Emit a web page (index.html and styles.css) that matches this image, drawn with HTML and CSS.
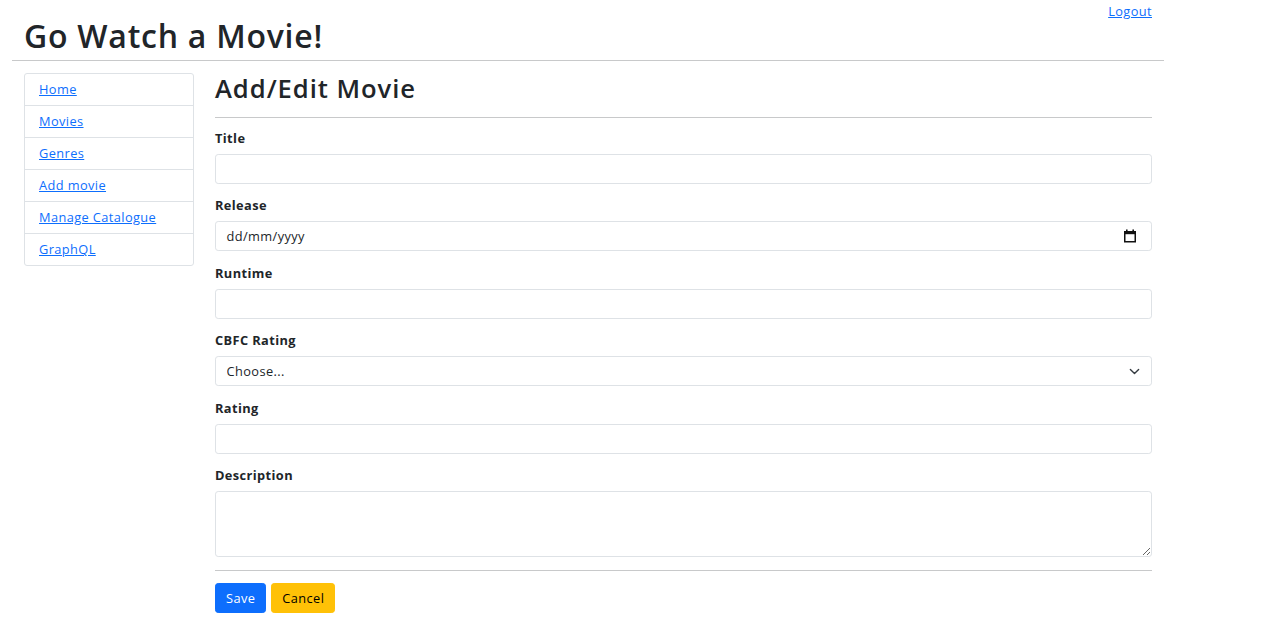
FILE: index.html
```html
<!DOCTYPE html>
<html lang="en">
<head>
<meta charset="utf-8">
<title>Go Watch a Movie!</title>
<link rel="stylesheet" href="styles.css">
</head>
<body>
<div class="page">
  <header class="top">
    <h1 class="brand">Go Watch a Movie!</h1>
    <a class="logout" href="#!">Logout</a>
  </header>
  <hr class="rule-main">
  <div class="layout">
    <nav class="sidebar">
      <div class="list-group">
        <a class="list-item" href="#!">Home</a>
        <a class="list-item" href="#!">Movies</a>
        <a class="list-item" href="#!">Genres</a>
        <a class="list-item" href="#!">Add movie</a>
        <a class="list-item" href="#!">Manage Catalogue</a>
        <a class="list-item" href="#!">GraphQL</a>
      </div>
    </nav>
    <main class="content">
      <h2 class="page-title">Add/Edit Movie</h2>
      <hr class="rule">
      <form class="movie-form">
        <div class="field">
          <label class="field-label" for="title">Title</label>
          <input class="control" id="title" type="text">
        </div>
        <div class="field">
          <label class="field-label" for="release">Release</label>
          <div class="control control-date" id="release">
            <span class="date-text">dd/mm/yyyy</span>
            <svg class="cal-icon" width="14" height="14" viewBox="0 0 14 14" aria-hidden="true">
              <rect x="1" y="2" width="12" height="3.2" fill="#111"/>
              <rect x="3" y="0.5" width="1.6" height="2.5" fill="#111"/>
              <rect x="9.4" y="0.5" width="1.6" height="2.5" fill="#111"/>
              <rect x="1.75" y="3" width="10.5" height="9.75" fill="none" stroke="#111" stroke-width="1.5"/>
            </svg>
          </div>
        </div>
        <div class="field">
          <label class="field-label" for="runtime">Runtime</label>
          <input class="control" id="runtime" type="text">
        </div>
        <div class="field">
          <label class="field-label" for="cbfc">CBFC Rating</label>
          <div class="select-wrap">
            <select class="control control-select" id="cbfc">
              <option>Choose...</option>
            </select>
            <svg class="chevron" width="11" height="11" viewBox="0 0 16 16" aria-hidden="true">
              <path d="M2 5l6 6 6-6" fill="none" stroke="#343a40" stroke-width="2" stroke-linecap="round" stroke-linejoin="round"/>
            </svg>
          </div>
        </div>
        <div class="field">
          <label class="field-label" for="rating">Rating</label>
          <input class="control" id="rating" type="text">
        </div>
        <div class="field">
          <label class="field-label" for="description">Description</label>
          <textarea class="control control-area" id="description" rows="3"></textarea>
        </div>
        <hr class="rule-form">
        <div class="actions">
          <button class="btn btn-save" type="button">Save</button>
          <button class="btn btn-cancel" type="button">Cancel</button>
        </div>
      </form>
    </main>
  </div>
</div>
</body>
</html>
```

FILE: styles.css
```css
* { box-sizing: border-box; }

html, body {
  margin: 0;
  padding: 0;
  background: #fff;
}

body {
  font-family: "Open Sans", "Noto Sans", sans-serif;
  font-size: 12.8px;
  line-height: 19px;
  letter-spacing: 0.4px;
  color: #212529;
}

a { color: #0d6efd; }

.page {
  width: 1152px;
  margin-left: 12px;
}

.top {
  display: flex;
  justify-content: space-between;
  align-items: flex-start;
  padding: 0 12px;
}

.brand {
  margin: 17px 0 5px;
  font-size: 32px;
  line-height: 38px;
  font-weight: 600;
  letter-spacing: 0.75px;
}

.logout {
  padding-top: 2px;
  line-height: 19px;
}

.rule-main {
  margin: 0;
  border: 0;
  border-top: 1px solid #c8c9ca;
}

.layout {
  display: grid;
  grid-template-columns: 191px 961px;
  margin-top: 12px;
}

.sidebar {
  padding: 0 9px 0 12px;
}

.content {
  padding: 0 12px;
}

.list-group {
  display: flex;
  flex-direction: column;
  border: 1px solid #dee2e6;
  border-radius: 3px;
}

.list-item {
  display: block;
  padding: 6px 14px;
  line-height: 19px;
  border-top: 1px solid #dee2e6;
}

.list-item:first-child { border-top: 0; }

.page-title {
  margin: 0;
  font-size: 25.6px;
  line-height: 31px;
  font-weight: 600;
  letter-spacing: 0.95px;
}

.rule {
  margin: 13px 0 11px;
  border: 0;
  border-top: 1px solid #c8c9ca;
}

.field {
  margin-bottom: 12.4px;
}

.field-label {
  display: block;
  font-weight: 700;
  line-height: 19px;
  margin-bottom: 6px;
}

.control {
  display: block;
  width: 100%;
  height: 30px;
  margin: 0;
  padding: 0 10.5px;
  border: 1px solid #dee2e6;
  border-radius: 3.2px;
  background: #fff;
  font: inherit;
  letter-spacing: inherit;
  color: #212529;
  outline: none;
}

.control-date {
  display: flex;
  align-items: center;
  justify-content: space-between;
  padding-right: 14px;
}

.cal-icon { display: block; }

.select-wrap { position: relative; }

.control-select {
  appearance: none;
  -webkit-appearance: none;
}

.chevron {
  position: absolute;
  right: 12px;
  top: 10px;
}

.control-area {
  height: 66px;
  padding: 5px 10.5px;
  resize: vertical;
}

.rule-form {
  margin: 13.4px 0 11.8px;
  border: 0;
  border-top: 1px solid #c8c9ca;
}

.actions {
  display: flex;
  gap: 5px;
}

.btn {
  height: 30px;
  padding: 0 10px;
  border: 1px solid transparent;
  border-radius: 3.2px;
  font: inherit;
  letter-spacing: inherit;
  cursor: pointer;
}

.btn-save {
  background: #0d6efd;
  border-color: #0d6efd;
  color: #fff;
}

.btn-cancel {
  background: #ffc107;
  border-color: #ffc107;
  color: #000;
}
```
